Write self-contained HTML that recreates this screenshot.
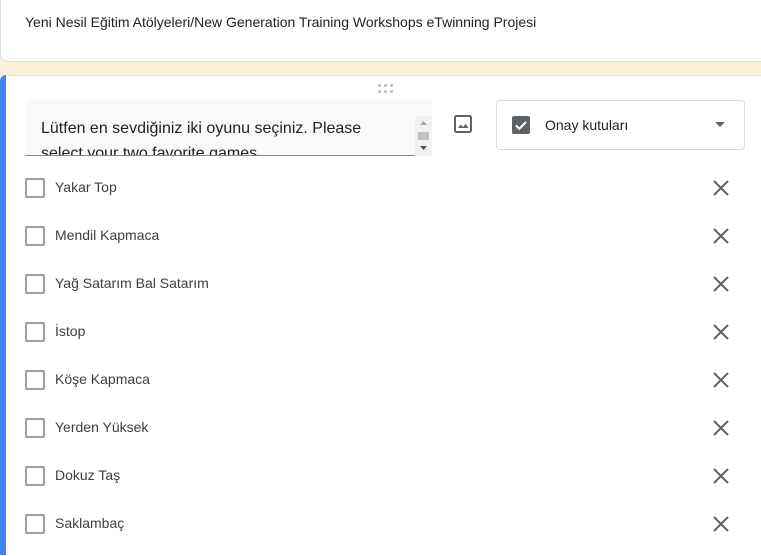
<!DOCTYPE html>
<html><head><style>
body{margin:0;width:761px;height:539px;overflow:hidden;background:#fbf0dc;font-family:"Liberation Sans",sans-serif;position:relative}
.top{position:absolute;left:0;top:-2px;width:770px;height:64px;background:#fff;border:1px solid #dadce0;border-radius:0 0 8px 8px;box-sizing:border-box}
.top span{position:absolute;left:24px;top:15px;font-size:14px;color:#202124}
.card{position:absolute;left:0;top:75px;width:770px;height:480px;background:#fff;border-top:1px solid #e0e0e0;border-radius:8px 0 0 0}
.bar{position:absolute;left:0;top:75px;width:6px;height:480px;background:#4285f4;border-radius:8px 0 0 0}
.dot{position:absolute;width:3px;height:3px;background:#bdbdbd;border-radius:50%}
.q{position:absolute;left:25px;top:100px;width:407px;height:56px;background:#f8f9fa;border-radius:4px 4px 0 0;overflow:hidden}
.qt{position:absolute;left:16px;top:16px;width:340px;font-size:16px;line-height:25px;color:#202124}
.ln{position:absolute;left:0;top:55px;width:390px;height:1px;background:#80868b}
.sb{position:absolute;left:390px;top:16px;width:17px;height:40px;background:#f1f1f1}
.dd{position:absolute;left:496px;top:100px;width:249px;height:50px;border:1px solid #dadce0;border-radius:4px;box-sizing:border-box}
.dd .cb{position:absolute;left:15px;top:15px;width:18px;height:18px;background:#5f6368;border-radius:2px}
.dd span{position:absolute;left:48px;top:16px;font-size:14px;color:#202124}
.opt{position:absolute;left:25px;width:720px;height:20px}
.opt .b{position:absolute;left:0;top:0;width:16px;height:16px;border:2px solid #9aa0a6;border-radius:2px}
.opt span{position:absolute;left:30px;top:1px;font-size:14px;color:#3c4043}
.opt svg{position:absolute;left:688px;top:2px}
</style></head><body>
<div class="top"><span>Yeni Nesil Eğitim Atölyeleri/New Generation Training Workshops eTwinning Projesi</span></div>
<div class="card"></div>
<div class="bar"></div>
<div class="dot" style="left:378px;top:84px"></div><div class="dot" style="left:384px;top:84px"></div><div class="dot" style="left:390px;top:84px"></div>
<div class="dot" style="left:378px;top:90px"></div><div class="dot" style="left:384px;top:90px"></div><div class="dot" style="left:390px;top:90px"></div>
<div class="q"><div class="qt">Lütfen en sevdiğiniz iki oyunu seçiniz. Please select your two favorite games.</div><div class="ln"></div>
<div class="sb"><svg width="17" height="40" style="display:block"><path d="M5 9l3.5-4 3.5 4z" fill="#a3a3a3"/><rect x="3" y="16" width="11" height="8" fill="#c1c1c1"/><path d="M5 30l3.5 4 3.5-4z" fill="#505050"/></svg></div></div>
<svg style="position:absolute;left:454px;top:115px" width="18" height="18"><rect x="1" y="1" width="16" height="16" rx="1.5" fill="none" stroke="#5f6368" stroke-width="2"/><path d="M4 13l3-3.5 2 2.5 2.5-3 3 4z" fill="#5f6368"/></svg>
<div class="dd"><div class="cb"><svg width="18" height="18"><path d="M4 9.5l3.3 3.3L14 6" fill="none" stroke="#fff" stroke-width="2"/></svg></div><span>Onay kutuları</span>
<svg style="position:absolute;left:218px;top:21px" width="10" height="6"><path d="M0 0h10L5 5z" fill="#5f6368"/></svg></div>
<div class="opt" style="top:178px"><div class="b"></div><span>Yakar Top</span><svg width="16" height="16"><path d="M1 1l14 14M15 1L1 15" stroke="#5f6368" stroke-width="2"/></svg></div>
<div class="opt" style="top:226px"><div class="b"></div><span>Mendil Kapmaca</span><svg width="16" height="16"><path d="M1 1l14 14M15 1L1 15" stroke="#5f6368" stroke-width="2"/></svg></div>
<div class="opt" style="top:274px"><div class="b"></div><span>Yağ Satarım Bal Satarım</span><svg width="16" height="16"><path d="M1 1l14 14M15 1L1 15" stroke="#5f6368" stroke-width="2"/></svg></div>
<div class="opt" style="top:322px"><div class="b"></div><span>İstop</span><svg width="16" height="16"><path d="M1 1l14 14M15 1L1 15" stroke="#5f6368" stroke-width="2"/></svg></div>
<div class="opt" style="top:370px"><div class="b"></div><span>Köşe Kapmaca</span><svg width="16" height="16"><path d="M1 1l14 14M15 1L1 15" stroke="#5f6368" stroke-width="2"/></svg></div>
<div class="opt" style="top:418px"><div class="b"></div><span>Yerden Yüksek</span><svg width="16" height="16"><path d="M1 1l14 14M15 1L1 15" stroke="#5f6368" stroke-width="2"/></svg></div>
<div class="opt" style="top:466px"><div class="b"></div><span>Dokuz Taş</span><svg width="16" height="16"><path d="M1 1l14 14M15 1L1 15" stroke="#5f6368" stroke-width="2"/></svg></div>
<div class="opt" style="top:514px"><div class="b"></div><span>Saklambaç</span><svg width="16" height="16"><path d="M1 1l14 14M15 1L1 15" stroke="#5f6368" stroke-width="2"/></svg></div>
</body></html>
